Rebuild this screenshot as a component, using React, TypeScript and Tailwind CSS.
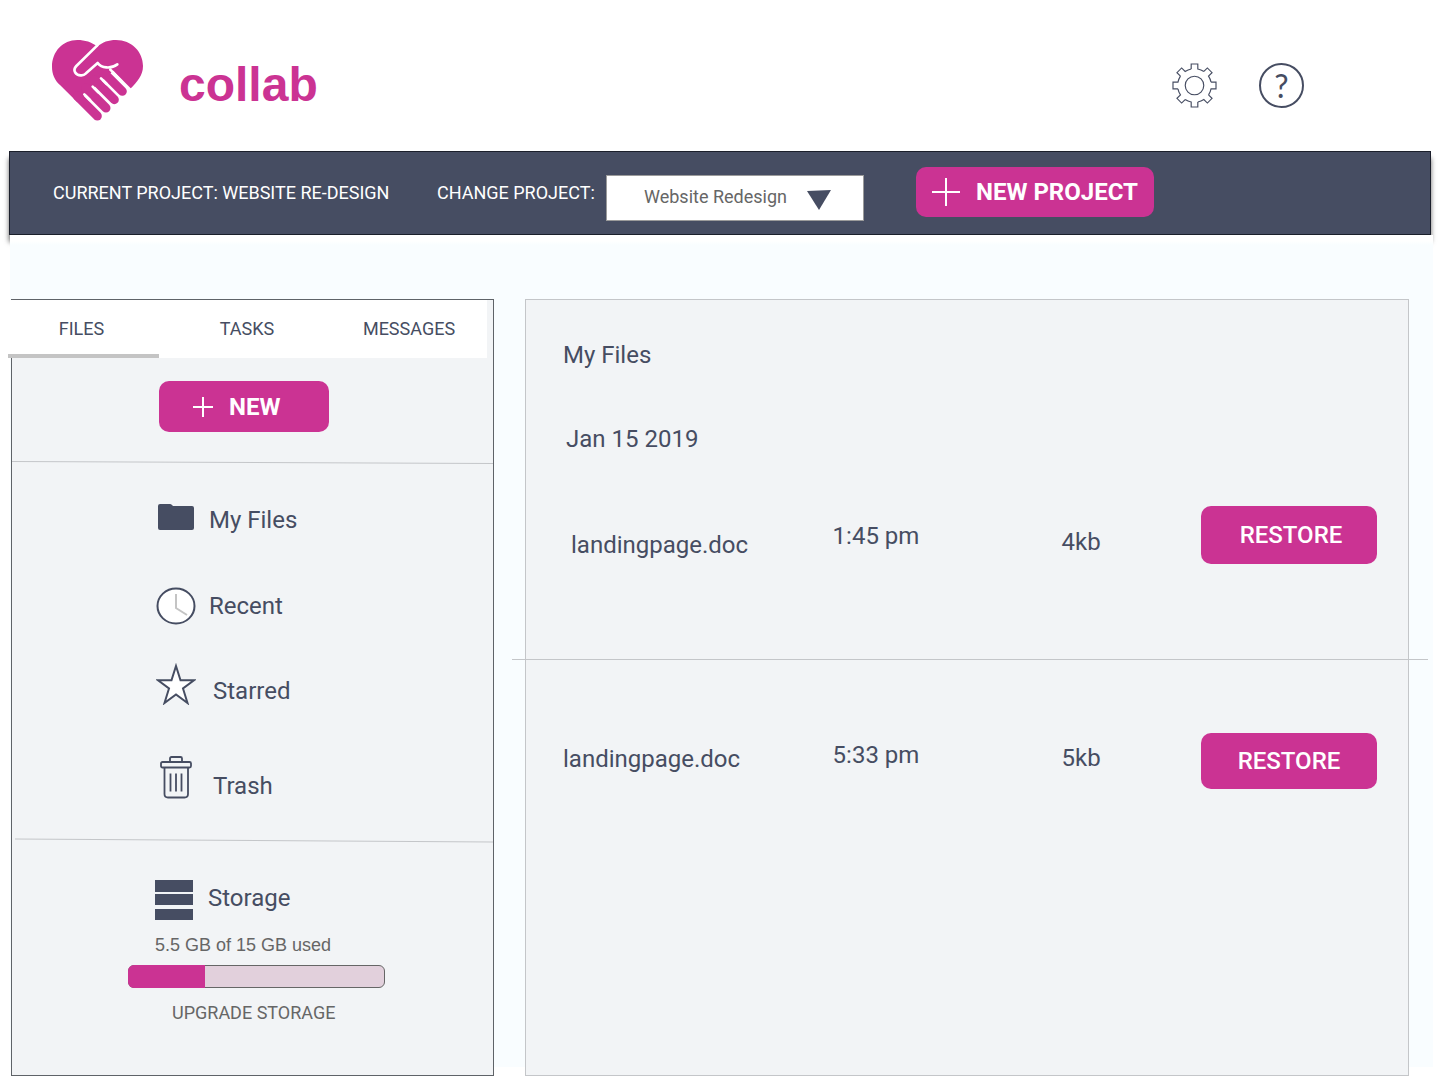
import React from "react";

function Logo() {
  return (
    <svg viewBox="36 30 273 243" className="h-[81px] w-[91px]" aria-hidden="true">
      <path
        fill="#cb3393"
        d="M36 110C36 65 68 30 112 30C135 30 155 36 172 50C188 36 205 30 228 30C275 30 309 66 309 108C309 136 292 156 270 177L220 122L112 217L60 165C44 150 36 132 36 110Z"
      />
      <g stroke="#cb3393" strokeWidth="27" strokeLinecap="round">
        <path d="M172 258L112 198" />
        <path d="M198 234L138 174" />
        <path d="M223 209L163 149" />
        <path d="M247 184L187 124" />
      </g>
      <g stroke="#fff" strokeWidth="8" fill="none" strokeLinecap="round" strokeLinejoin="round">
        <path d="M172 46L109 108C96 122 108 137 124 136C130 136 134 134 138 130L173 99C184 114 212 118 232 103" />
        <path d="M211 119L270 178" />
        <path d="M133 193L150 210M158 170L175 187M183 145L200 162" />
      </g>
    </svg>
  );
}

const TOOTH_ANGLES = [0, 45, 90, 135, 180, 225, 270, 315];

function GearIcon() {
  return (
    <svg viewBox="-68 -68 136 136" className="size-[45px]" fill="none" stroke="#464d62" strokeWidth="3.500" aria-hidden="true">
      {TOOTH_ANGLES.map((angle) => (
        <path key={angle} d="M-10-50V-65H10V-50A51 51 0 0 1 28.3-42.4" transform={`rotate(${angle})`} />
      ))}
      <circle r="28" />
    </svg>
  );
}

function PlusIcon({ className }: { className: string }) {
  return (
    <svg viewBox="0 0 28 28" className={className} fill="none" stroke="currentColor" strokeWidth="2" aria-hidden="true">
      <path d="M0 14H28M14 0V28" vectorEffect="non-scaling-stroke" />
    </svg>
  );
}

function FolderIcon() {
  return (
    <svg viewBox="0 0 36 28" className="h-7 w-9" fill="#464d62" aria-hidden="true">
      <path d="M0 3Q0 1 2 1H12Q13 1 14 2L15 3H34Q36 3 36 5V25Q36 27 34 27H2Q0 27 0 25Z" />
    </svg>
  );
}

function ClockIcon() {
  return (
    <svg viewBox="0 0 40 38" className="h-[38px] w-10" fill="none" aria-hidden="true">
      <ellipse cx="20" cy="19" rx="18.5" ry="17.5" fill="#fff" stroke="#464d62" strokeWidth="2" />
      <path d="M20 7V21L31 28" stroke="#c4c4c4" strokeWidth="2" />
    </svg>
  );
}

function StarIcon() {
  return (
    <svg viewBox="0 0 40 42" className="h-[42px] w-10" aria-hidden="true">
      <path
        d="M20 3L24.500 17.300H38L27 25.500L31.500 40L20 31.500L8.500 40L13 25.500L2 17.300H15.500Z"
        fill="#fff"
        stroke="#464d62"
        strokeWidth="2"
      />
    </svg>
  );
}

function TrashIcon() {
  return (
    <svg viewBox="0 0 32 44" className="h-11 w-8" fill="none" stroke="#464d62" strokeWidth="1.8" aria-hidden="true">
      <rect x="1" y="7" width="30" height="5.5" rx="1.5" />
      <path d="M10 7V3.500Q10 2 11.500 2H20.500Q22 2 22 3.500V7" />
      <path d="M4.500 12.500V39Q4.500 42.500 8 42.500H24.500Q28 42.500 28 39V12.500" />
      <path d="M10.500 18.500V36.500M16 18.500V36.500M21.500 18.500V36.500" />
    </svg>
  );
}

function StorageIcon() {
  return (
    <svg viewBox="0 0 38 40" className="h-10 w-[38px]" fill="#464d62" aria-hidden="true">
      <path d="M0 0H38V12H0ZM0 14H38V25H0ZM0 29H38V40H0Z" />
    </svg>
  );
}

const TABS = [
  { label: "FILES", cell: "pr-1" },
  { label: "TASKS", cell: "" },
  { label: "MESSAGES", cell: "pr-1" },
];

const NAV = [
  { label: "My Files", icon: <FolderIcon />, row: "h-[86px] pb-[7px]", text: "pl-[13px] pt-[6px]" },
  { label: "Recent", icon: <ClockIcon />, row: "h-[86px]", text: "pl-[13px]" },
  { label: "Starred", icon: <StarIcon />, row: "h-[86px] pb-4", text: "pl-[17px] pt-[14px]" },
  { label: "Trash", icon: <TrashIcon />, row: "h-[86px] pb-[2px]", text: "pl-[17px] pt-[18px]" },
];

const FILES = [
  {
    name: "landingpage.doc",
    time: "1:45 pm",
    size: "4kb",
    row: "h-[185px]",
    nameCell: "pl-[59px] pt-[55px]",
    timeCell: "pt-[46px]",
    sizeCell: "pt-[52px]",
    actionCell: "pt-8",
    action: "h-[58px] pl-1",
  },
  {
    name: "landingpage.doc",
    time: "5:33 pm",
    size: "5kb",
    row: "border-t border-[#c4c6c9]",
    nameCell: "pl-[51px] pt-[83px]",
    timeCell: "pt-[79px]",
    sizeCell: "pt-[82px]",
    actionCell: "pt-[73px]",
    action: "h-14",
  },
];

export default function App() {
  return (
    <div className="bg-white font-['Roboto',sans-serif] text-[#464d62]">
      <header className="flex h-[151px] items-start justify-between pt-10 pr-[135px] pl-[52px]">
        <a href="#" className="flex items-center gap-9 text-[#cb3393]">
          <Logo />
          <span className="pt-2 font-['Liberation_Sans',sans-serif] text-[48px] leading-[56px] font-bold">collab</span>
        </a>
        <div className="flex gap-[42px] pt-[23px]">
          <button type="button" aria-label="Settings">
            <GearIcon />
          </button>
          <button
            type="button"
            aria-label="Help"
            className="flex size-[45px] items-center justify-center rounded-full border-2 border-[#464d62] font-['Lato',sans-serif] text-[32px] font-normal"
          >
            ?
          </button>
        </div>
      </header>

      <nav className="mr-2 ml-[9px] flex h-[84px] items-center border border-[#1b1f2b] bg-[#464d62] pl-[43px] text-lg text-white shadow-[0_7px_5px_rgba(0,0,0,0.6)]">
        <p className="w-[384px]">CURRENT PROJECT: WEBSITE RE-DESIGN</p>
        <label htmlFor="project" className="w-[169px]">
          CHANGE PROJECT:
        </label>
        <div className="relative mt-[10px] w-[258px]">
          <select
            id="project"
            className="h-[46px] w-full appearance-none border border-[#9b9b9b] bg-white pr-16 pb-[2px] pl-[37px] text-lg text-[#666]"
          >
            <option>Website Redesign</option>
          </select>
          <svg
            viewBox="0 0 24 20"
            className="pointer-events-none absolute top-[15px] right-[33px] h-5 w-6"
            fill="#464d62"
            aria-hidden="true"
          >
            <path d="M0 1L24 0L12 20Z" />
          </svg>
        </div>
        <button
          type="button"
          className="mb-[2px] ml-[52px] flex h-[50px] items-center gap-4 rounded-[10px] bg-[#cb3393] px-4 text-2xl font-bold"
        >
          <PlusIcon className="size-7" />
          NEW PROJECT
        </button>
      </nav>

      <main className="relative mr-[6px] ml-[10px] grid grid-cols-[483fr_884fr] gap-[31px] bg-[linear-gradient(to_bottom,#fff_6px,#f9fdff_10px,#f9fdff_calc(100%-9px),#fff_calc(100%-9px))] pt-16 pr-6 pl-px">
        <aside className="min-h-[777px] border border-[#5f6368] bg-[#f2f4f6]">
          <div role="tablist" className="relative mr-[6px] -ml-1 grid h-[58px] grid-cols-[151fr_176fr_152fr] bg-white text-lg">
            {TABS.map(({ label, cell }, index) => (
              <button
                key={label}
                type="button"
                role="tab"
                aria-selected={index === 0}
                className={`relative flex items-center justify-center ${cell}`}
              >
                {label}
                {index === 0 && <span className="absolute inset-x-0 bottom-0 h-1 bg-[#c4c4c4]" />}
              </button>
            ))}
          </div>

          <div className="pt-[23px] pb-[30px] pl-[147px]">
            <button
              type="button"
              className="flex h-[51px] w-[170px] items-center gap-4 rounded-[10px] bg-[#cb3393] pl-[34px] text-2xl font-bold text-white"
            >
              <PlusIcon className="size-5" />
              NEW
            </button>
          </div>
          <hr className="rotate-[0.25deg] border-[#c4c6c9]" />

          <ul className="pt-[14px] pb-[19px] pl-[144px] text-2xl">
            {NAV.map(({ label, icon, row, text }) => (
              <li key={label}>
                <a href="#" className={`flex items-center ${row}`}>
                  <span className="flex w-10 justify-center">{icon}</span>
                  <span className={text}>{label}</span>
                </a>
              </li>
            ))}
          </ul>
          <hr className="ml-[3px] rotate-[0.35deg] border-[#c4c6c9]" />

          <section className="w-[373px] pt-[39px] pl-[116px] text-lg text-[#666]">
            <h2 className="flex gap-[15px] pl-[27px] text-2xl leading-9 text-[#464d62]">
              <StorageIcon />
              Storage
            </h2>
            <p id="usage" className="pt-[11px] pl-[27px] font-['Liberation_Sans',sans-serif]">
              5.5 GB of 15 GB used
            </p>
            <div
              role="progressbar"
              aria-labelledby="usage"
              aria-valuemin={0}
              aria-valuemax={15}
              aria-valuenow={5.5}
              className="relative mt-[6px] h-[23px] rounded-md border border-[#666] bg-[#e2d0dc]"
            >
              <div className="absolute -inset-y-px -left-px w-[30%] rounded-l-md bg-[#cb3393]" />
            </div>
            <a href="#" className="mt-[11px] ml-11 block">
              UPGRADE STORAGE
            </a>
          </section>
        </aside>

        <section className="border border-[#c4c6c9] bg-[#f2f4f6] pt-[39px] text-2xl">
          <h1 className="pl-[37px]">My Files</h1>
          <h2 className="pt-[52px] pl-10">Jan 15 2019</h2>
          <table className="mt-[19px] -ml-[14px] w-[calc(100%+34px)] table-fixed border-collapse text-left">
            <colgroup>
              <col className="w-[35%]" />
              <col className="w-[25%]" />
              <col className="w-[15%]" />
              <col />
            </colgroup>
            <tbody>
              {FILES.map((file) => (
                <tr key={file.time} className={`align-top ${file.row}`}>
                  <td className={file.nameCell}>{file.name}</td>
                  <td className={file.timeCell}>{file.time}</td>
                  <td className={file.sizeCell}>{file.size}</td>
                  <td className={file.actionCell}>
                    <button
                      type="button"
                      className={`ml-[2px] w-44 rounded-[10px] bg-[#cb3393] font-medium text-white ${file.action}`}
                    >
                      RESTORE
                    </button>
                  </td>
                </tr>
              ))}
            </tbody>
          </table>
        </section>
      </main>
    </div>
  );
}
